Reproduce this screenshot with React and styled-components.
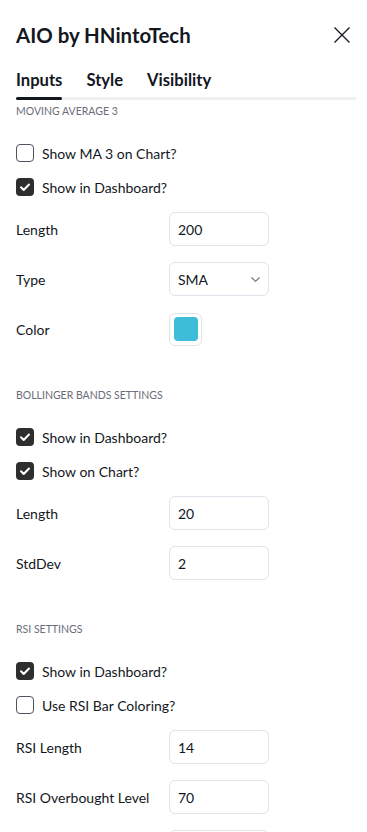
import React from "react";
import styled, { createGlobalStyle } from "styled-components";

const GlobalStyle = createGlobalStyle`
  body {
    margin: 0;
    background: #fff;
    font-family: "Lato", "Noto Sans", sans-serif;
    color: #131722;
  }
`;

const sections = [
  {
    title: "Moving Average 3",
    checks: [
      { label: "Show MA 3 on Chart?", checked: false },
      { label: "Show in Dashboard?", checked: true },
    ],
    fields: [
      { label: "Length", kind: "input", value: "200" },
      { label: "Type", kind: "select", value: "SMA" },
      { label: "Color", kind: "color", value: "#3dbdd8" },
    ],
  },
  {
    title: "Bollinger Bands Settings",
    checks: [
      { label: "Show in Dashboard?", checked: true },
      { label: "Show on Chart?", checked: true },
    ],
    fields: [
      { label: "Length", kind: "input", value: "20" },
      { label: "StdDev", kind: "input", value: "2" },
    ],
  },
  {
    title: "RSI Settings",
    checks: [
      { label: "Show in Dashboard?", checked: true },
      { label: "Use RSI Bar Coloring?", checked: false },
    ],
    fields: [
      { label: "RSI Length", kind: "input", value: "14" },
      { label: "RSI Overbought Level", kind: "input", value: "70" },
      { label: "RSI Oversold Level", kind: "input", value: "30" },
    ],
  },
];

const App = () => {
  return (
    <Dialog>
      <GlobalStyle />
      <Header>
        <Title>AIO by HNintoTech</Title>
        <CloseButton aria-label="Close">
          <svg width="16" height="16" viewBox="0 0 16 16">
            <path d="M0.5 0.5L15.5 15.5M15.5 0.5L0.5 15.5" stroke="#131722" strokeWidth="1.3" fill="none" />
          </svg>
        </CloseButton>
      </Header>
      <TabList>
        <Tab $active>Inputs</Tab>
        <Tab>Style</Tab>
        <Tab>Visibility</Tab>
      </TabList>
      <Content>
        {sections.map((s, i) => (
          <Section key={s.title} $first={i === 0}>
            <SectionTitle>{s.title}</SectionTitle>
            {s.checks.map((c) => (
              <CheckRow key={c.label}>
                <CheckBox $checked={c.checked}>
                  {c.checked && (
                    <svg width="18" height="18" viewBox="0 0 18 18">
                      <path d="M5 9.3L7.7 12L13 6.5" stroke="#fff" strokeWidth="2" fill="none" strokeLinecap="round" strokeLinejoin="round" />
                    </svg>
                  )}
                </CheckBox>
                <span>{c.label}</span>
              </CheckRow>
            ))}
            {s.fields.map((f) => (
              <FieldRow key={f.label}>
                <Label>{f.label}</Label>
                {f.kind === "input" && <Input>{f.value}</Input>}
                {f.kind === "select" && (
                  <Input>
                    {f.value}
                    <svg width="9" height="5" viewBox="0 0 9 5">
                      <path d="M0.5 0.5L4.5 4.3L8.5 0.5" stroke="#6a6d78" strokeWidth="1.1" fill="none" />
                    </svg>
                  </Input>
                )}
                {f.kind === "color" && (
                  <Swatch>
                    <SwatchFill style={{ background: f.value }} />
                  </Swatch>
                )}
              </FieldRow>
            ))}
          </Section>
        ))}
      </Content>
    </Dialog>
  );
};

const Dialog = styled.div`
  width: 367px;
  height: 832px;
  overflow: hidden;
  background: #fff;
`;

const Header = styled.div`
  height: 70px;
  padding: 0 17px 0 16px;
  display: flex;
  align-items: center;
  justify-content: space-between;
`;

const Title = styled.h1`
  margin: 0;
  font-size: 20.4px;
  line-height: 24px;
  font-weight: 700;
`;

const CloseButton = styled.div`
  width: 16px;
  height: 16px;
  display: flex;
`;

const TabList = styled.div`
  margin: 0 11px 0 16px;
  display: flex;
  gap: 24px;
  background: linear-gradient(#f0f0f0, #f0f0f0) bottom / 100% 3px no-repeat;
`;

const Tab = styled.div`
  font-size: 16.6px;
  line-height: 20px;
  font-weight: 700;
  padding-bottom: 10px;
  position: relative;

  &::after {
    content: "";
    position: absolute;
    left: 0;
    right: 0;
    bottom: 0;
    height: 3px;
    border-radius: 2px;
    background: ${(p) => (p.$active ? "#131722" : "transparent")};
  }
`;

const Content = styled.div`
  padding: 0 11px 0 16px;
`;

const Section = styled.div`
  margin-top: ${(p) => (p.$first ? "3px" : "33px")};
`;

const SectionTitle = styled.div`
  font-size: 10.5px;
  line-height: 16px;
  text-transform: uppercase;
  color: #6a6d78;
  margin-bottom: 17px;
`;

const CheckRow = styled.div`
  height: 34px;
  display: flex;
  align-items: center;
  gap: 8px;
  font-size: 14px;
`;

const CheckBox = styled.div`
  width: 18px;
  height: 18px;
  box-sizing: border-box;
  border-radius: 4px;
  border: ${(p) => (p.$checked ? "none" : "1.5px solid #50535e")};
  background: ${(p) => (p.$checked ? "#2e2e2e" : "#fff")};
  display: flex;
`;

const FieldRow = styled.div`
  height: 50px;
  display: grid;
  grid-template-columns: 153px auto;
  align-items: center;
  justify-content: start;
`;

const Label = styled.span`
  font-size: 14px;
`;

const Input = styled.div`
  width: 100px;
  height: 34px;
  box-sizing: border-box;
  border: 1px solid #e0e3eb;
  border-radius: 6px;
  padding: 0 8px 0 8px;
  display: flex;
  align-items: center;
  justify-content: space-between;
  font-size: 14px;
`;

const Swatch = styled.div`
  width: 33px;
  height: 33px;
  box-sizing: border-box;
  border: 1px solid #e0e3eb;
  border-radius: 6px;
  display: flex;
  align-items: center;
  justify-content: center;
`;

const SwatchFill = styled.div`
  width: 24px;
  height: 24px;
  border-radius: 4px;
`;

export default App;
